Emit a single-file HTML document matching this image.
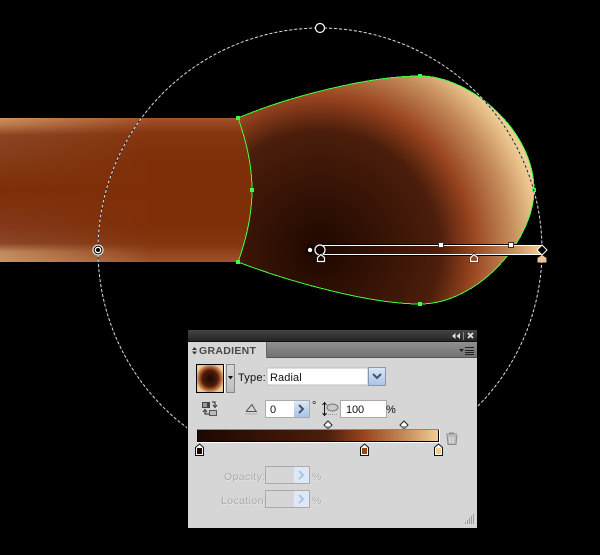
<!DOCTYPE html>
<html><head><meta charset="utf-8">
<style>
html,body{margin:0;padding:0;background:#000;width:600px;height:555px;overflow:hidden}
svg{display:block}
text{font-family:"Liberation Sans",sans-serif;font-size:11px;fill:#111}
.dis{fill:#a8a8a8;font-size:10.5px;letter-spacing:.4px}
.sh{fill:#f2f2f2;font-size:10.5px;letter-spacing:.4px}
</style></head><body>
<svg width="600" height="555" viewBox="0 0 600 555" xmlns="http://www.w3.org/2000/svg">
<defs>
<radialGradient id="rg" gradientUnits="userSpaceOnUse" cx="320" cy="250" r="222">
<stop offset="0" stop-color="#1e0700"/><stop offset=".54" stop-color="#4c1e0b"/><stop offset=".69" stop-color="#98441f"/><stop offset=".86" stop-color="#c48a5a"/><stop offset="1" stop-color="#f0cd93"/>
</radialGradient>
<linearGradient id="bar" gradientUnits="userSpaceOnUse" x1="320" y1="0" x2="542" y2="0">
<stop offset="0" stop-color="#1e0700"/><stop offset=".54" stop-color="#4c1e0b"/><stop offset=".69" stop-color="#98441f"/><stop offset=".86" stop-color="#c48a5a"/><stop offset="1" stop-color="#f0cd93"/>
</linearGradient>
<linearGradient id="bar2" x1="0" y1="0" x2="1" y2="0">
<stop offset="0" stop-color="#1e0700"/><stop offset=".54" stop-color="#4c1e0b"/><stop offset=".69" stop-color="#98441f"/><stop offset=".86" stop-color="#c48a5a"/><stop offset="1" stop-color="#f0cd93"/>
</linearGradient>
<radialGradient id="sw" cx=".5" cy=".5" r=".55">
<stop offset="0" stop-color="#1e0700"/><stop offset=".54" stop-color="#4c1e0b"/><stop offset=".69" stop-color="#98441f"/><stop offset=".86" stop-color="#c48a5a"/><stop offset="1" stop-color="#f0cd93"/>
</radialGradient>
<linearGradient id="stemL" x1="0" y1="0" x2="0" y2="1">
<stop offset="0" stop-color="#cc9362"/><stop offset=".05" stop-color="#bd7b4e"/><stop offset=".12" stop-color="#8a4524"/><stop offset=".3" stop-color="#843c18"/><stop offset=".5" stop-color="#7f2f08"/><stop offset=".75" stop-color="#84391a"/><stop offset=".87" stop-color="#8b4728"/><stop offset=".93" stop-color="#c08a5e"/><stop offset="1" stop-color="#cc9362"/>
</linearGradient>
<linearGradient id="stemR" x1="0" y1="0" x2="0" y2="1">
<stop offset="0" stop-color="#a2522a"/><stop offset=".1" stop-color="#84360f"/><stop offset=".3" stop-color="#7f2f08"/><stop offset=".75" stop-color="#7f2f08"/><stop offset=".88" stop-color="#84360f"/><stop offset="1" stop-color="#a2522a"/>
</linearGradient>
<linearGradient id="fade" x1="0" y1="0" x2="1" y2="0"><stop offset="0" stop-color="#000"/><stop offset=".6" stop-color="#fff"/></linearGradient>
<mask id="m"><rect x="0" y="118" width="252" height="144" fill="url(#fade)"/></mask>
<linearGradient id="title" x1="0" y1="0" x2="0" y2="1"><stop offset="0" stop-color="#444"/><stop offset="1" stop-color="#222"/></linearGradient>
<linearGradient id="tabs" x1="0" y1="0" x2="0" y2="1"><stop offset="0" stop-color="#909090"/><stop offset="1" stop-color="#707070"/></linearGradient>
<linearGradient id="btn" x1="0" y1="0" x2="0" y2="1"><stop offset="0" stop-color="#dbe7f7"/><stop offset="1" stop-color="#a9c3e6"/></linearGradient>
<linearGradient id="arr" x1="0" y1="0" x2="0" y2="1"><stop offset="0" stop-color="#d8d8d8"/><stop offset="1" stop-color="#bdbdbd"/></linearGradient>
</defs>

<rect width="600" height="555" fill="#000"/>
<!-- stem -->
<path d="M0,118H238C246,140 252,165 252,190C252,215 246,240 238,262H0Z" fill="url(#stemL)"/>
<path d="M0,118H238C246,140 252,165 252,190C252,215 246,240 238,262H0Z" fill="url(#stemR)" mask="url(#m)"/>
<!-- bulb -->
<path d="M238,118C290,96 370,76 420,76C470,76 534,130 534,190C534,240 478,304 420,304C370,304 290,282 238,262C246,240 252,215 252,190C252,165 246,140 238,118Z" fill="url(#rg)"/>
<path d="M238,118C290,96 370,76 420,76C470,76 534,130 534,190C534,240 478,304 420,304C370,304 290,282 238,262C246,240 252,215 252,190C252,165 246,140 238,118Z" fill="none" stroke="#3dff3d" stroke-width="1" shape-rendering="crispEdges"/>
<g fill="#3dff3d">
<rect x="236" y="116" width="4" height="4"/><rect x="418" y="74" width="4" height="4"/><rect x="532" y="188" width="4" height="4"/>
<rect x="418" y="302" width="4" height="4"/><rect x="236" y="260" width="4" height="4"/><rect x="250" y="188" width="4" height="4"/>
</g>
<!-- dashed circle -->
<circle cx="320" cy="250" r="222" fill="none" stroke="#111" stroke-width="1"/>
<circle cx="320" cy="250" r="222" fill="none" stroke="#ddd" stroke-width="1" stroke-dasharray="3 2"/>
<circle cx="320" cy="28" r="4.5" fill="#000" stroke="#fff" stroke-width="1.2"/>
<circle cx="98" cy="250" r="5" fill="#000" stroke="#fff" stroke-width="1"/>
<circle cx="98" cy="250" r="3.4" fill="#fff"/><circle cx="98" cy="250" r="2" fill="#000"/>
<!-- gradient annotator -->
<rect x="320" y="244" width="222" height="12" fill="#000"/>
<rect x="320" y="245" width="222" height="10" fill="url(#bar)"/>
<rect x="320" y="245" width="222" height="1" fill="#fff"/><rect x="320" y="254" width="222" height="1" fill="#fff"/>
<circle cx="310" cy="250" r="4" fill="#000"/><circle cx="310" cy="250" r="2.200" fill="#fff"/>
<circle cx="320" cy="250" r="5" fill="#0d0300" stroke="#fff" stroke-width="1.200"/>
<rect x="438.500" y="242.500" width="5" height="5" fill="#fff" stroke="#333"/>
<rect x="508.500" y="242.500" width="5" height="5" fill="#fff" stroke="#333"/>
<path d="M542,245L547,250L542,255L537,250Z" fill="#000" stroke="#fff"/>
<path d="M316.500,262.500V257L321,253L325.500,257V262.500Z" fill="#000"/>
<path d="M317.500,261.500V257.500L321,254.500L324.500,257.500V261.500Z" fill="#1e0700" stroke="#fff" stroke-width="1.200"/>
<path d="M469.500,262.500V257L474,253L478.500,257V262.500Z" fill="#000"/>
<path d="M470.500,261.500V257.500L474,254.500L477.500,257.500V261.500Z" fill="#98441f" stroke="#fff" stroke-width="1.200"/>
<path d="M537.500,262.500V258L542,255L546.500,258V262.500Z" fill="#eec596"/>

<!-- panel -->
<rect x="187" y="329" width="290" height="201" fill="#000"/>
<rect x="188" y="330" width="289" height="12" fill="url(#title)"/>
<rect x="188" y="342" width="289" height="16" fill="url(#tabs)"/>
<rect x="188" y="358" width="289" height="170" fill="#d6d6d6"/>
<rect x="188" y="342" width="78" height="16" fill="#d6d6d6"/>
<rect x="188" y="341" width="289" height="1" fill="#111"/>
<rect x="266" y="342" width="1" height="16" fill="#666"/>
<rect x="267" y="357" width="210" height="1" fill="#555"/>
<path d="M192,350l2.500,-3l2.500,3zM192,351.500l2.500,3l2.500,-3z" fill="#333"/>
<text x="199" y="354" style="font-weight:bold;font-size:10.500px;letter-spacing:.3px;fill:#4a4a4a">GRADIENT</text>
<!-- title icons -->
<path d="M452,336l3.500,-3v6zM456.500,336l3.500,-3v6z" fill="#ddd"/>
<rect x="463" y="332" width="1" height="8" fill="#888"/>
<path d="M468,333l5,5M473,333l-5,5" stroke="#ddd" stroke-width="1.800" fill="none"/>
<!-- panel menu -->
<path d="M459,349h5l-2.500,3z" fill="#222"/>
<path d="M465,347.500h9M465,350.500h9M465,352.500h9M465,354.500h9" stroke="#222" stroke-width="1" fill="none"/>

<!-- swatch -->
<rect x="196" y="364" width="28" height="29" fill="#000"/>
<rect x="197" y="365" width="26" height="27" fill="url(#sw)"/>
<rect x="224" y="364" width="1" height="29" fill="#fff"/>
<rect x="226.500" y="364.500" width="8" height="28" fill="url(#arr)" stroke="#888"/>
<path d="M228,376h5l-2.500,3.500z" fill="#111"/>
<text x="238" y="381" style="letter-spacing:.2px">Type:</text>
<rect x="267" y="368" width="101" height="17" fill="#fff" stroke="#bdbdbd"/>
<text x="270" y="381" style="letter-spacing:.1px">Radial</text>
<rect x="368.500" y="367.500" width="17" height="18" fill="url(#btn)" stroke="#8b97a8"/>
<path d="M373,374l4,4l4,-4" fill="none" stroke="#44546a" stroke-width="2"/>

<!-- swap icon -->
<rect x="202" y="402" width="8" height="6" fill="#444"/><rect x="203" y="403" width="4" height="4" fill="#999"/>
<rect x="209" y="410" width="8" height="6" fill="#555"/><rect x="210" y="411" width="6" height="4" fill="#bbb"/>
<path d="M212,402h3v4M213,405l2,2.500l2,-2.500M209,414h-4v-3M203,412l2,-2.500l2,2.500" fill="none" stroke="#222" stroke-width="1"/>
<!-- angle icon -->
<path d="M246,411.500h11M256,411.500L252,404.500L246,411.500" fill="none" stroke="#555" stroke-width="1"/>
<rect x="245" y="413" width="13" height="2" fill="#c4c4c4"/>
<!-- angle field -->
<rect x="265.500" y="400.500" width="44" height="17" fill="#fff" stroke="#aaa"/>
<rect x="294" y="401" width="15" height="16" fill="url(#btn)"/>
<path d="M299,405l4,4l-4,4" fill="none" stroke="#44546a" stroke-width="2"/>
<text x="270" y="413">0</text>
<text x="312" y="409" style="font-size:11px">°</text>
<!-- aspect icon -->
<path d="M324.500,403v12M322.500,405l2,-2.500l2,2.500M322.500,413l2,2.500l2,-2.500" fill="none" stroke="#111" stroke-width="1"/>
<ellipse cx="332.500" cy="407.500" rx="5.500" ry="3.500" fill="#c9c9c9" stroke="#777"/>
<path d="M326,414.500h12" stroke="#999" stroke-width="1" stroke-dasharray="1 1"/>
<rect x="340.500" y="400.500" width="46" height="17" fill="#fff" stroke="#aaa"/>
<text x="346" y="413" style="letter-spacing:-.1px">100</text>
<text x="386" y="413">%</text>

<!-- midpoints -->
<path d="M328,421l4,4l-4,4l-4,-4Z" fill="#fff" stroke="#222"/>
<path d="M404,421l4,4l-4,4l-4,-4Z" fill="#fff" stroke="#222"/>
<path d="M325,426h6l-3,3Z" fill="#999"/><path d="M401,426h6l-3,3Z" fill="#999"/>
<!-- slider -->
<rect x="197" y="429" width="243" height="14" fill="#fff"/>
<rect x="197" y="429" width="242" height="13" fill="#000"/>
<rect x="198" y="430" width="240" height="11" fill="url(#bar2)" />
<rect x="197" y="429" width="242" height="1" fill="#888"/>
<!-- stops -->
<path d="M195.500,455.500V447.500L199.500,444L203.500,447.500V455.500Z" fill="#fff" stroke="#111"/>
<rect x="197" y="448" width="5" height="6" fill="#1e0700"/>
<path d="M360.500,455.500V447.500L364.500,444L368.500,447.500V455.500Z" fill="#fff" stroke="#111"/>
<rect x="362" y="448" width="5" height="6" fill="#98441f"/>
<path d="M434.500,455.500V447.500L438.500,444L442.500,447.500V455.500Z" fill="#fff" stroke="#111"/>
<rect x="436" y="448" width="5" height="6" fill="#f0cd93"/>
<!-- trash -->
<path d="M446,434h11M449,433h5" stroke="#8a8a8a" fill="none"/>
<path d="M447,435l1,9.500h8l1,-9.500" fill="#bcbcbc" stroke="#8a8a8a"/>
<path d="M450,437v6M453,437v6" stroke="#eee" fill="none"/>

<!-- disabled fields -->
<text x="224.500" y="480.500" class="sh">Opacity:</text><text x="224" y="480" class="dis">Opacity:</text>
<rect x="265.500" y="466.500" width="44" height="17" fill="none" stroke="#aaa"/>
<rect x="294" y="467" width="15" height="16" fill="#dde9f9"/>
<path d="M299,471l4,4l-4,4" fill="none" stroke="#b0c4de" stroke-width="2"/>
<text x="312.500" y="480.500" class="sh">%</text><text x="312" y="480" class="dis">%</text>
<text x="221.500" y="504.500" class="sh">Location:</text><text x="221" y="504" class="dis">Location:</text>
<rect x="265.500" y="490.500" width="44" height="17" fill="none" stroke="#aaa"/>
<rect x="294" y="491" width="15" height="16" fill="#dde9f9"/>
<path d="M299,495l4,4l-4,4" fill="none" stroke="#b0c4de" stroke-width="2"/>
<text x="312.500" y="504.500" class="sh">%</text><text x="312" y="504" class="dis">%</text>
<!-- grip -->
<path d="M473,515h1M471,517h1M473,517h1M469,519h1M471,519h1M473,519h1M467,521h1M469,521h1M471,521h1M473,521h1M465,523h1M467,523h1M469,523h1M471,523h1M473,523h1" stroke="#888" stroke-width="1.500" fill="none"/>
</svg>
</body></html>
